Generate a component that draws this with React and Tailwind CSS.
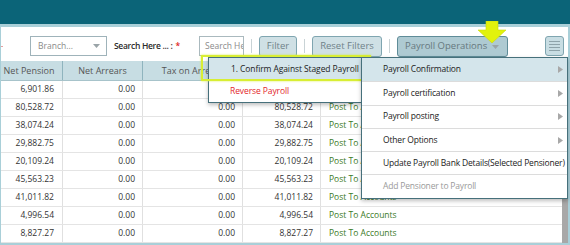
import React from 'react';

const rows = [
  '6,901.86',
  '80,528.72',
  '38,074.24',
  '29,882.75',
  '20,109.24',
  '45,563.23',
  '41,011.82',
  '4,996.54',
  '8,827.27',
];

const mainMenu = [
  { label: 'Payroll Confirmation', sub: true, active: true },
  { label: 'Payroll certification', sub: true },
  { label: 'Payroll posting', sub: true },
  { label: 'Other Options', sub: true },
  { label: 'Update Payroll Bank Details(Selected Pensioner)' },
  { label: 'Add Pensioner to Payroll', disabled: true },
];

function Caret() {
  return (
    <svg width="7" height="4" viewBox="0 0 7 4" className="shrink-0">
      <path d="M0 0 L7 0 L3.5 4 Z" fill="#9aa4a8" />
    </svg>
  );
}

function Arrow() {
  return (
    <svg width="5" height="7" viewBox="0 0 5 7" className="shrink-0">
      <path d="M0 0 L5 3.5 L0 7 Z" fill="#a8a8a8" />
    </svg>
  );
}

function Sep() {
  return <div className="w-px h-[14px] bg-[#c9d3d6] mx-[7px]" />;
}

export default function App() {
  return (
    <div className="relative w-[570px] h-[245px] overflow-hidden bg-white font-['Open_Sans',sans-serif]">
      {/* top bar */}
      <div className="h-[24px] bg-[#0b6478]" />

      <div className="border-t-[3px] border-l border-r-2 border-b-2 border-[#a9cfd8] h-[221px] flex flex-col overflow-hidden">
        {/* toolbar */}
        <div className="h-[34px] shrink-0 flex items-start pt-[9px] pl-[29px] relative">
          <span className="absolute left-0 top-[19px] w-[2px] h-px bg-[#e7a0a0]" />
          <div className="w-[77px] h-[20px] border border-[#9fb3ba] flex items-center justify-between pl-[7px] pr-[6px] text-[8.5px] text-[#8a8a8a]">
            <span>Branch...</span>
            <Caret />
          </div>
          <div className="ml-[7px] h-[20px] flex items-center text-[8.5px] font-semibold tracking-[-0.3px] text-[#2b2b2b] w-[85px]">
            Search Here ... :<span className="text-[#e02424] ml-[3px]">*</span>
          </div>
          <div className="w-[45px] h-[20px] border border-[#aab9be] flex items-center pl-[5px] text-[8.5px] text-[#8a8a8a] overflow-hidden whitespace-nowrap">
            Search Here
          </div>
          <div className="h-[20px] flex items-center">
            <Sep />
          </div>
          <div className="w-[38px] h-[21px] rounded-[3px] border border-[#7fa5b0] bg-[#cfe0e5] flex items-center justify-center text-[9.5px] text-[#6f8289]">
            Filter
          </div>
          <div className="h-[20px] flex items-center">
            <Sep />
          </div>
          <div className="w-[70px] h-[21px] rounded-[3px] border border-[#7fa5b0] bg-[#cfe0e5] flex items-center justify-center text-[9.5px] text-[#6f8289] whitespace-nowrap">
            Reset Filters
          </div>
          <div className="h-[20px] flex items-center">
            <Sep />
          </div>
          <div className="w-[111px] h-[21px] rounded-[3px] border border-[#5f8c98] bg-[#aecad2] flex items-center pl-[7px] gap-[5px] text-[9.5px] text-[#66787e] whitespace-nowrap">
            Payroll Operations
            <Caret />
          </div>
          <div className="ml-[37px] w-[19px] h-[20px] rounded-[3px] border border-[#7fa5b0] bg-[#c8dde3] flex flex-col items-center justify-center gap-[2px]">
            <div className="w-[11px] h-px bg-[#8ea3aa]" />
            <div className="w-[11px] h-px bg-[#8ea3aa]" />
            <div className="w-[11px] h-px bg-[#8ea3aa]" />
            <div className="w-[11px] h-px bg-[#8ea3aa]" />
          </div>
        </div>

        {/* table */}
        <div className="flex flex-1 overflow-hidden">
          <div className="flex-1 -ml-[5px] text-[8.5px] text-[#333]">
            <div className="grid grid-cols-[67px_80px_100px_78px_1fr] h-[20px] bg-[#c7dde3] border-b border-[#a7c3ca] text-[#555] text-[9px]">
              <div className="flex items-center justify-center border-r border-[#8fb4be] whitespace-nowrap">Net Pension</div>
              <div className="flex items-center justify-center border-r border-[#8fb4be]">Net Arrears</div>
              <div className="flex items-center justify-center border-r border-[#8fb4be]">Tax on Arrears</div>
              <div className="flex items-center justify-center border-r border-[#8fb4be]">Net Payable</div>
              <div className="flex items-center justify-center">Action</div>
            </div>
            {rows.map((v, i) => (
              <div
                key={i}
                className="grid grid-cols-[67px_80px_100px_78px_1fr] h-[18px] border-b border-[#e4e4e4]"
              >
                <div className="flex items-center justify-end pr-[8px] border-r border-[#e0e0e0]">{v}</div>
                <div className="flex items-center justify-end pr-[7px] border-r border-[#e0e0e0]">0.00</div>
                <div className="flex items-center justify-end pr-[7px] border-r border-[#e0e0e0]">0.00</div>
                <div className="flex items-center justify-end pr-[7px] border-r border-[#e0e0e0]">{v}</div>
                <div className="flex items-center pl-[8px] text-[#3b7a1f]">Post To Accounts</div>
              </div>
            ))}
          </div>
          <div className="w-[6px] bg-[#eeeeee] flex flex-col justify-end">
            <div className="h-[90px] bg-[#a8a8a8]" />
          </div>
        </div>
      </div>

      {/* yellow annotation arrow */}
      <svg className="absolute left-[477px] top-[21px]" width="30" height="23" viewBox="0 0 30 23">
        <path d="M9 0 H21 V9 H29 L15 22 L1 9 H9 Z" fill="#e2f20c" stroke="#c9d80a" strokeWidth="0.6" />
      </svg>

      {/* submenu */}
      <div className="absolute left-[208px] top-[57px] w-[154px] border border-[#46707b] bg-white shadow-[0_2px_4px_rgba(0,0,0,0.25)] text-[8.5px] tracking-[-0.1px]">
        <div className="h-[23px] bg-[#d4e5eb] flex items-center pl-[22px] text-[#222] whitespace-nowrap">
          1. Confirm Against Staged Payroll
        </div>
        <div className="h-[21px] flex items-center pl-[21px] text-[#e3262b]">Reverse Payroll</div>
      </div>

      {/* highlight box */}
      <div className="absolute left-[201px] top-[55px] w-[170px] h-[26px] border-2 border-[#d8ee34] shadow-[0_0_2px_rgba(216,238,52,0.8)]" />

      {/* main menu */}
      <div className="absolute left-[361px] top-[57px] w-[207px] border border-[#46707b] bg-white shadow-[0_2px_4px_rgba(0,0,0,0.25)] text-[8.5px] tracking-[-0.18px]">
        {mainMenu.map((m, i) => (
          <div
            key={m.label}
            className={
              'h-[23.3px] flex items-center justify-between pl-[21px] pr-[4px] whitespace-nowrap ' +
              (i > 0 ? 'border-t border-[#dcdcdc] ' : '') +
              (m.active ? 'bg-[#d4e5eb] ' : '') +
              (m.disabled ? 'text-[#9a9a9a]' : 'text-[#222]')
            }
          >
            <span>{m.label}</span>
            {m.sub && <Arrow />}
          </div>
        ))}
      </div>
    </div>
  );
}
